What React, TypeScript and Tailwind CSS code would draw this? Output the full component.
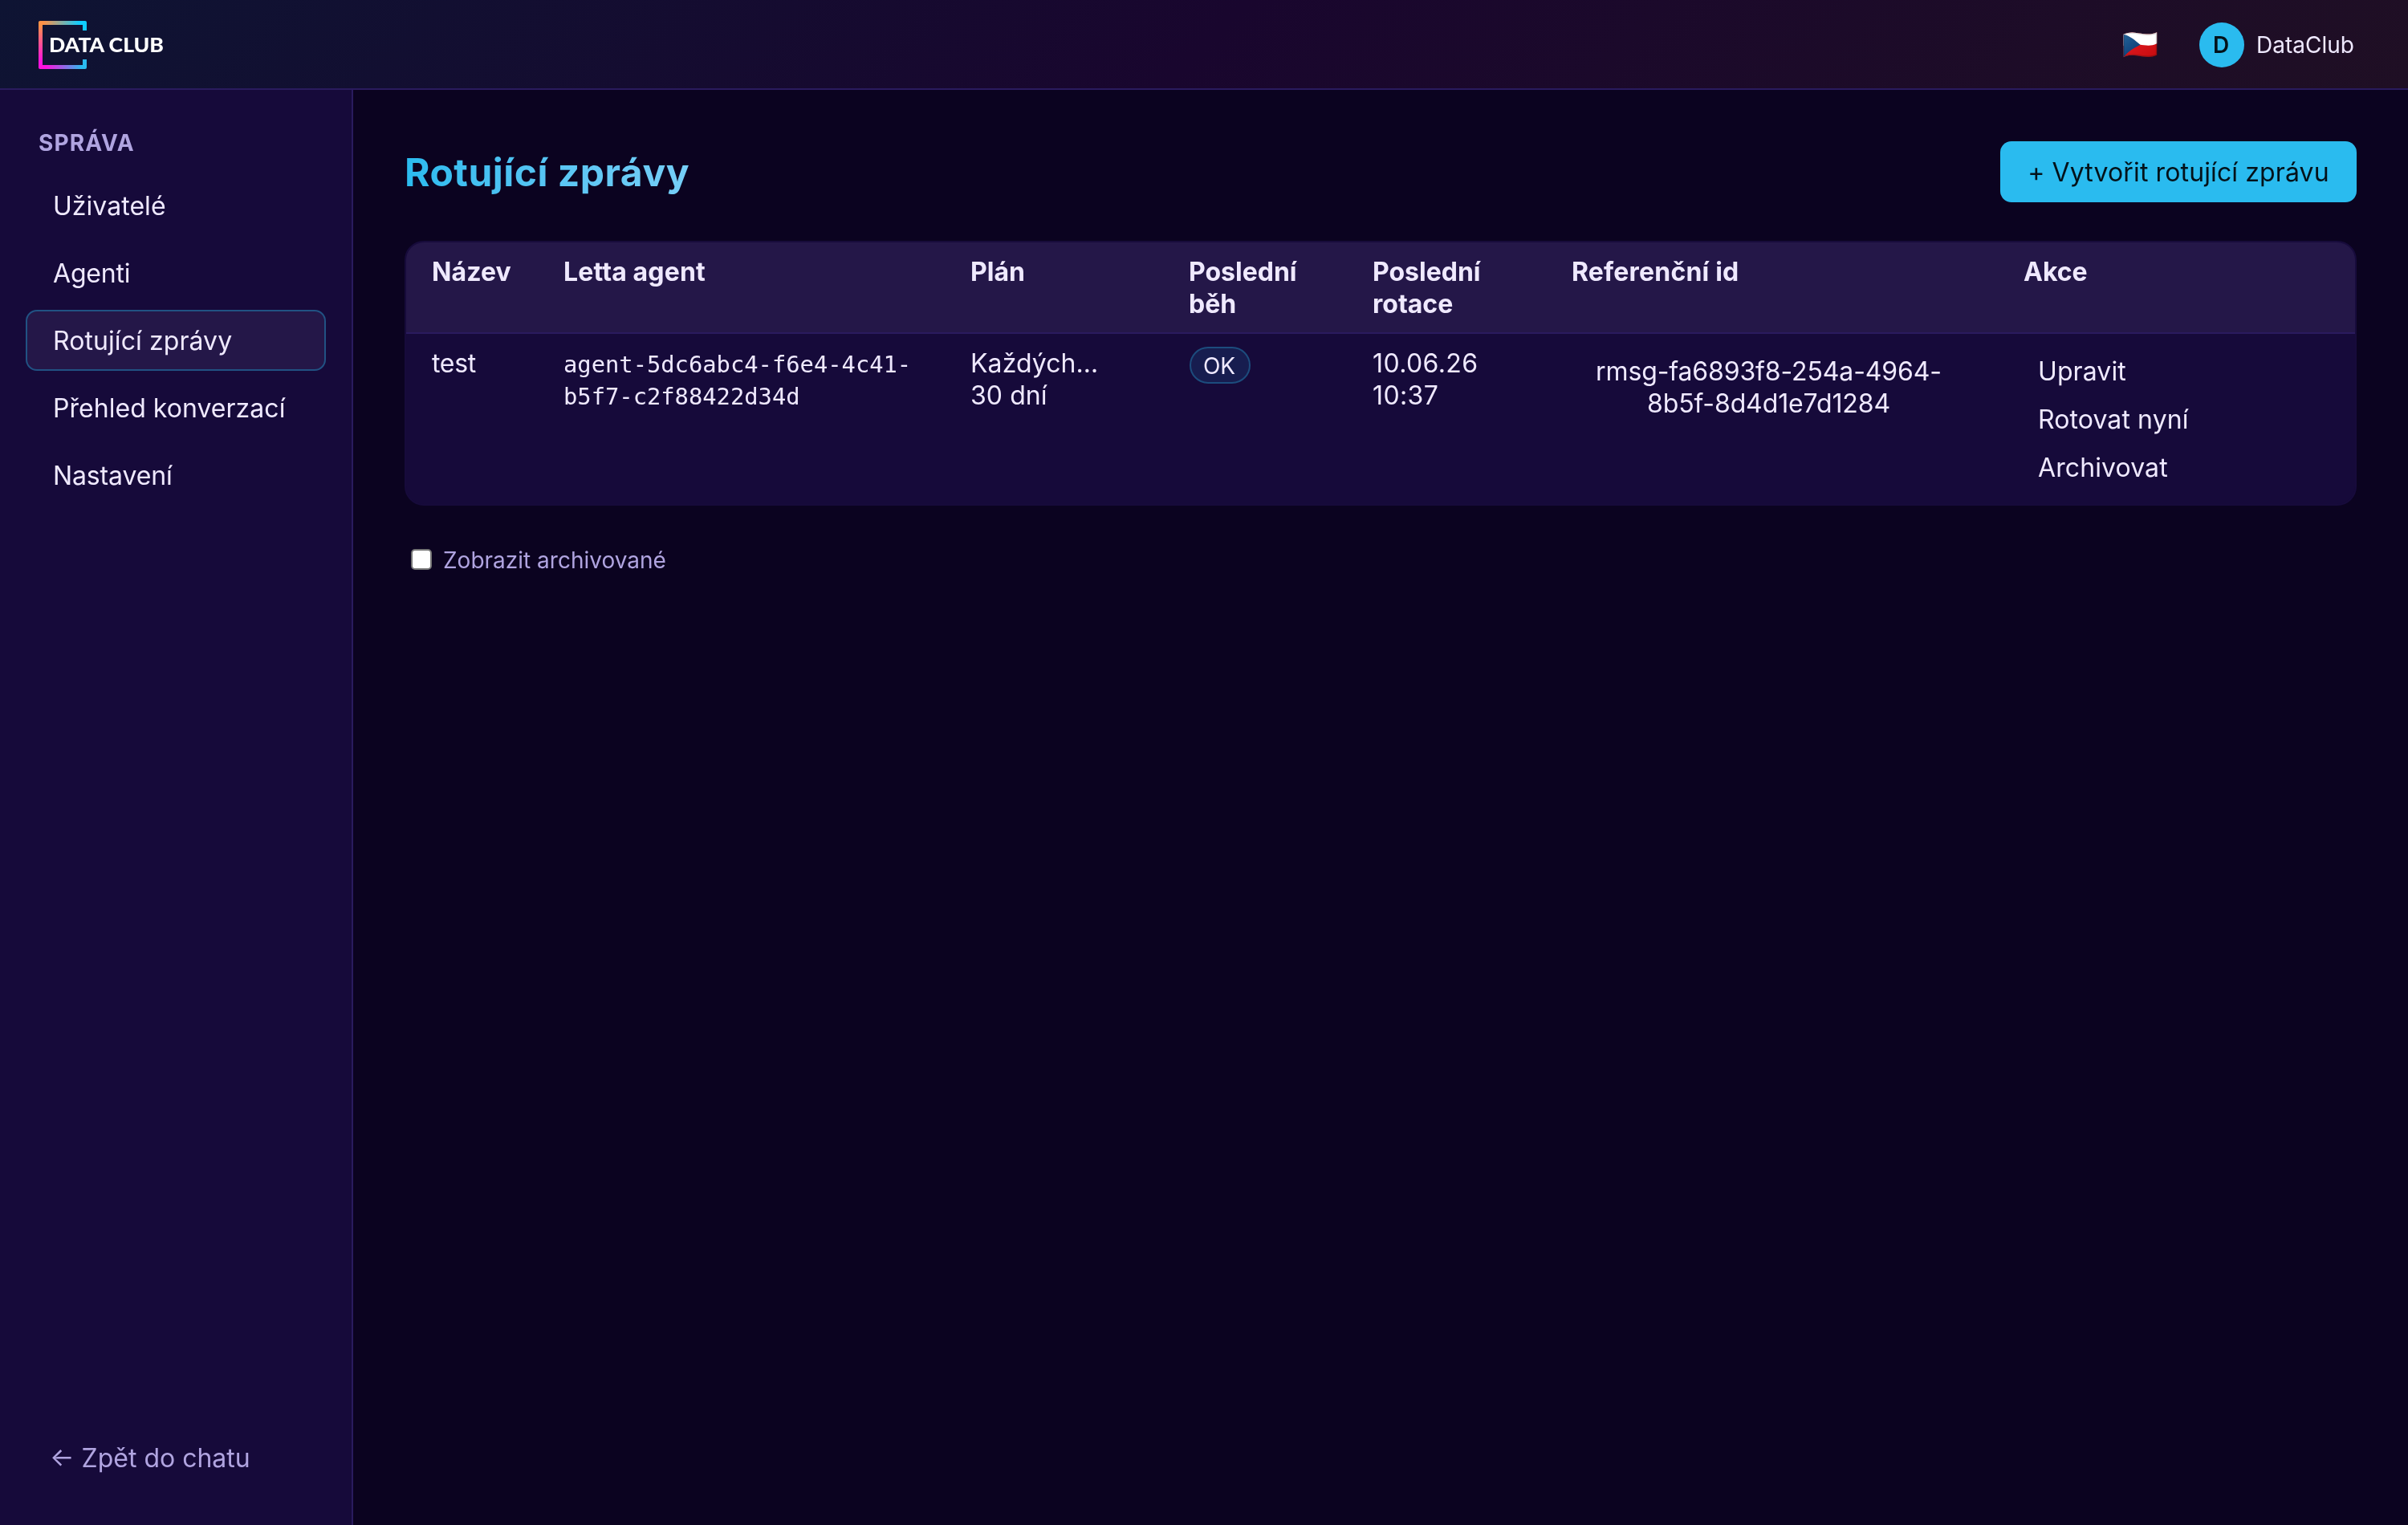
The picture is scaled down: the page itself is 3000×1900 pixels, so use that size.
import clsx from "clsx";

const navItems = [
  { label: "Uživatelé", tracking: "tracking-[0.02px]" },
  { label: "Agenti", tracking: "tracking-[-0.1px]" },
  { label: "Rotující zprávy", tracking: "tracking-[0.04px]", active: true },
  { label: "Přehled konverzací", tracking: "tracking-[0.02px]" },
  { label: "Nastavení", tracking: "tracking-[-0.06px]" },
];

const rowActions = ["Upravit", "Rotovat nyní", "Archivovat"];

function Logo() {
  return (
    <svg width="80" height="30" viewBox="0 0 160 60" className="overflow-visible" aria-label="Data Club">
      <defs>
        <linearGradient id="top" x1="0" x2="1">
          <stop offset="0.1" stopColor="#ff9147" />
          <stop offset="0.85" stopColor="#0fcdff" />
        </linearGradient>
        <linearGradient id="left" x1="0" x2="0" y1="0" y2="1">
          <stop offset="0.08" stopColor="#ff9147" />
          <stop offset="0.85" stopColor="#ff12de" />
        </linearGradient>
        <linearGradient id="bottom" x1="0" x2="1">
          <stop offset="0.15" stopColor="#ff12de" />
          <stop offset="0.9" stopColor="#2abbef" />
        </linearGradient>
      </defs>
      <path d="M2 0H58Q60 0 60 2V12H55V5H5L0 2Q0 0 2 0Z" fill="url(#top)" />
      <path d="M2 60H58Q60 60 60 58V48H55V55H5L0 58Q0 60 2 60Z" fill="url(#bottom)" />
      <rect y="1" width="5" height="58" rx="1" fill="url(#left)" />
      <text
        x="13"
        y="38.5"
        fill="#fff"
        fontFamily="Lato, sans-serif"
        fontWeight="900"
        fontSize="24"
        textLength="143"
        lengthAdjust="spacingAndGlyphs"
      >
        DATA CLUB
      </text>
    </svg>
  );
}

function Header() {
  return (
    <header className="flex h-14 items-center justify-between border-b border-[#2a1b5e] bg-[linear-gradient(135deg,#0e1433_0%,#19062e_50%,#1f0f24_100%)] pr-[33.5px] pl-6">
      <Logo />
      <div className="flex items-center">
        <span className="mr-[25.5px] text-lg leading-5">🇨🇿</span>
        <span className="mr-2 flex size-7 items-center justify-center rounded-full bg-[#2abbef] text-sm font-semibold text-[#04121a]">
          D
        </span>
        <span className="text-sm">DataClub</span>
      </div>
    </header>
  );
}

function Sidebar() {
  return (
    <aside className="flex w-55 shrink-0 flex-col border-r border-[#2a1b5e] bg-[#160a3a] px-4 pt-6 pb-[23px]">
      <h2 className="mb-3 pl-2 text-sm leading-[17px] font-bold tracking-[0.04em] text-[#b0a4e0]">SPRÁVA</h2>
      <nav className="flex flex-col gap-1">
        {navItems.map((item) => (
          <a
            key={item.label}
            className={clsx(
              "rounded-[7px] border px-4 py-2",
              item.tracking,
              item.active ? "border-[#215283] bg-[#241748]" : "border-transparent"
            )}
          >
            {item.label}
          </a>
        ))}
      </nav>
      <a className="mt-auto px-[15px] py-[9px] text-[#b0a4e0]">← Zpět do chatu</a>
    </aside>
  );
}

function MessagesTable() {
  return (
    <div className="overflow-hidden rounded-xl border border-[#170b3b] bg-[#160a3a]">
      <table className="w-full table-fixed text-left">
        <colgroup>
          <col className="w-[82px]" />
          <col className="w-[253.5px]" />
          <col className="w-[136px]" />
          <col className="w-[114.5px]" />
          <col className="w-[124px]" />
          <col className="w-[281.5px]" />
          <col />
        </colgroup>
        <thead>
          <tr className="border-b border-[#2a1b5e] bg-[#241748] align-top">
            <th className="px-4 py-2 font-bold tracking-[0.06px]">Název</th>
            <th className="px-4 py-2 font-bold tracking-[0.07px]">Letta agent</th>
            <th className="px-4 py-2 font-bold">Plán</th>
            <th className="px-4 py-2 font-bold">Poslední běh</th>
            <th className="px-4 py-2 font-bold">Poslední rotace</th>
            <th className="px-4 py-2 font-bold tracking-[0.1px]">Referenční id</th>
            <th className="px-4 py-2 font-bold">Akce</th>
          </tr>
        </thead>
        <tbody>
          <tr className="align-top">
            <td className="px-4 py-2 tracking-[-0.15px]">test</td>
            <td className="px-4 pt-[9px] pb-2 font-['DejaVu_Sans_Mono',monospace] text-[14.4px]">
              agent-5dc6abc4-f6e4-4c41-<br />b5f7-c2f88422d34d
            </td>
            <td className="px-4 py-2 tracking-[0.04px]">Každých…<br />30 dní</td>
            <td className="px-4 py-2">
              <span className="flex h-[23px] w-[38px] items-center justify-center rounded-full border border-[#1c4c7d] bg-[#171d4f] text-sm">
                OK
              </span>
            </td>
            <td className="px-4 py-2 tracking-[0.2px]">10.06.26<br />10:37</td>
            <td className="px-4 py-2">
              <button className="w-full py-[5px] pr-3 pl-2 text-center tracking-[-0.06px]">
                rmsg-fa6893f8-254a-4964-<br />8b5f-8d4d1e7d1284
              </button>
            </td>
            <td className="px-4 py-2">
              <div className="flex flex-col items-start">
                {rowActions.map((action) => (
                  <button key={action} className="px-[9px] py-[5px] tracking-[0.05px]">{action}</button>
                ))}
              </div>
            </td>
          </tr>
        </tbody>
      </table>
    </div>
  );
}

export default function App() {
  return (
    <div className="h-[1900px] w-[3000px] overflow-hidden bg-[#0b0320]">
      <div className="flex h-[950px] w-[1500px] origin-top-left scale-200 flex-col bg-[#0b0320] font-['Inter',sans-serif] text-base leading-5 text-[#efe9ff]">
        <Header />
        <div className="flex flex-1">
          <Sidebar />
          <main className="flex-1 p-8">
            <div className="mb-6 flex items-center justify-between">
              <h1 className="bg-linear-to-r from-[#2abbef] to-[#76cff8] bg-clip-text pt-px text-2xl leading-[30px] font-bold tracking-[0.24px] text-transparent">
                Rotující zprávy
              </h1>
              <button className="h-9.5 w-[222px] rounded-[7px] bg-[#2abbef] text-center tracking-[0.06px] whitespace-nowrap text-[#04121a]">
                + Vytvořit rotující zprávu
              </button>
            </div>
            <MessagesTable />
            <label className="mt-[25px] ml-1 flex items-center text-sm leading-[17px] text-[#b0a4e0]">
              <input type="checkbox" className="mr-[7px] size-[13px] appearance-none rounded-[2.5px] border border-[#767676] bg-white" />
              Zobrazit archivované
            </label>
          </main>
        </div>
      </div>
    </div>
  );
}
